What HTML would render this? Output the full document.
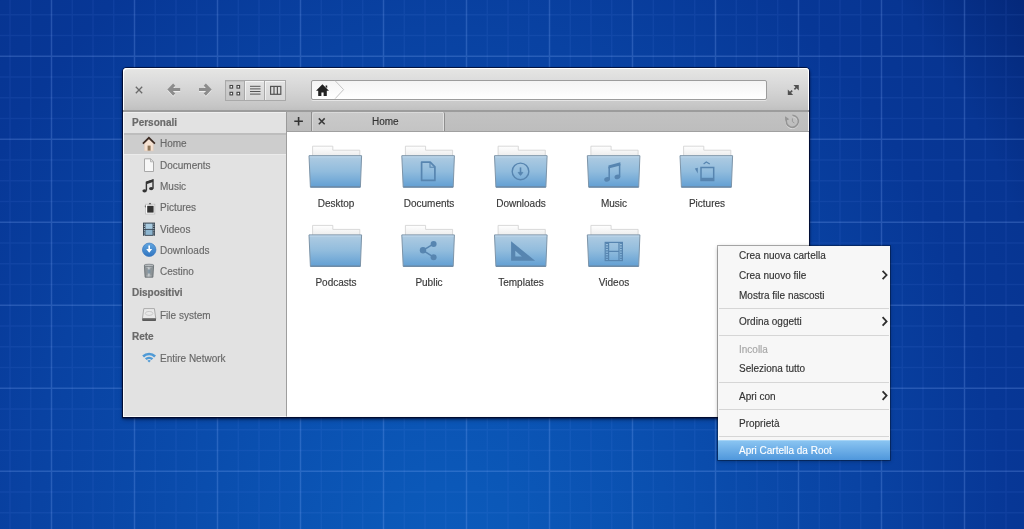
<!DOCTYPE html>
<html><head><meta charset="utf-8">
<style>
*{margin:0;padding:0;box-sizing:border-box}
html,body{width:1024px;height:529px;overflow:hidden}
body{position:relative;font-family:"Liberation Sans",sans-serif;font-size:10px;
background:radial-gradient(ellipse 732px 968px at 450px 600px,#0c5cbe 0%,#0b58b8 12%,#0942a2 59%,#073796 77%,#073592 87%,#04287a 100%);}
#grid{position:absolute;left:0;top:0;width:1024px;height:529px}
.win{position:absolute;left:123px;top:68px;width:686px;height:349px;background:#e2e2e2;
 border-radius:4px 4px 0 0;box-shadow:0 0 0 1px rgba(0,8,40,.75),0 1px 2px 1px rgba(0,0,30,.55),0 3px 4px rgba(0,0,30,.35)}
.tb{position:absolute;left:0;top:0;width:686px;height:44px;border-radius:4px 4px 0 0;
 background:linear-gradient(#e6e6e4 0%,#dcdcdc 30%,#d2d2d2 60%,#c6c6c6 90%,#c0c0c0 100%);border-bottom:2px solid #9c9c9c;box-shadow:inset 1px 1px 0 #fff,inset -1px 0 0 #fff}
.side{position:absolute;left:0;top:44px;width:163px;height:305px;background:#e2e2e2;border-top:1px solid #efefef;border-left:1px solid #fafafa;border-bottom:1px solid #fafafa}
.tabbar{position:absolute;left:163px;top:44px;width:523px;height:20px;background:linear-gradient(#c2c2c2,#bdbdbd);border-left:1px solid #9a9a9a;border-bottom:1px solid #a0a0a0;box-shadow:inset -1px 0 0 #f4f4f4}
.content{position:absolute;left:163px;top:64px;width:523px;height:285px;background:#fff;border-left:1px solid #9e9e9e;border-bottom:1px solid #fafafa;box-shadow:inset -1px 0 0 #fafafa}

.vs{position:absolute;top:80px;width:20px;height:21px;border:1px solid #a9a9a9;background:linear-gradient(#d0d0d0,#c6c6c6);box-shadow:inset 0 1px 1px rgba(0,0,0,.08)}
.vs2{background:linear-gradient(#e4e4e4,#d6d6d6);box-shadow:inset 1px 1px 0 rgba(255,255,255,.6);border-left:none}
.loc{position:absolute;left:311px;top:80px;width:456px;height:20px;border:1px solid #9c9c9c;border-radius:2px;background:linear-gradient(#f4f4f4,#fff);box-shadow:0 1px 0 rgba(255,255,255,.5)}

.selrow{position:absolute;left:124px;top:133px;width:162px;height:22px;background:#cdcdcd;border-top:2px solid #bdbdbd;border-bottom:1px solid #ebebeb}
.sh{position:absolute;left:131.5px;font-weight:bold;color:#6a6a6a;-webkit-text-stroke:.2px #6a6a6a;line-height:12px;white-space:nowrap}
.si{position:absolute;left:159.8px;color:#686868;-webkit-text-stroke:.15px #686868;line-height:12px;white-space:nowrap}

.plusb{position:absolute;left:287px;top:112px;width:25px;height:19px;background:linear-gradient(#c2c2c2,#bcbcbc);border-right:1px solid #8e8e8e}
.tab{position:absolute;left:312px;top:112px;width:133px;height:19px;background:linear-gradient(#cacaca,#c4c4c4);border-radius:2px 2px 0 0;border-right:1px solid #8e8e8e;box-shadow:inset 1px 1px 0 rgba(255,255,255,.3),inset -1px 0 0 rgba(255,255,255,.45)}
.tabtxt{position:absolute;-webkit-text-stroke:.15px #333;line-height:12px;white-space:nowrap}

.lab{position:absolute;width:80px;text-align:center;color:#3a3a3a;-webkit-text-stroke:.15px #333;line-height:12px;white-space:nowrap}

.menu{position:absolute;left:718px;top:246px;width:172px;height:214px;background:#f7f7f7;box-shadow:0 0 0 1px rgba(0,0,0,.3),0 1px 4px rgba(0,0,0,.35)}
.mhl{position:absolute;left:718px;top:440px;width:172px;height:20px;background:linear-gradient(#8cc6f2,#4f97dc);box-shadow:inset 0 1px 0 #a6d4f6}
.mi{position:absolute;left:739px;font-size:10px;-webkit-text-stroke:.15px currentColor;line-height:12px;white-space:nowrap}
.sep{position:absolute;left:719px;width:170px;height:1px;background:#d6d6d6}
.sh,.si,.lab,.mi,.tabtxt{will-change:transform}
</style></head><body>
<svg id="grid" width="1024" height="529"><path d="M10.0 0V529M30.75 0V529M72.25 0V529M93.0 0V529M113.75 0V529M155.25 0V529M176.0 0V529M196.75 0V529M238.25 0V529M259.0 0V529M279.75 0V529M321.25 0V529M342.0 0V529M362.75 0V529M404.25 0V529M425.0 0V529M445.75 0V529M487.25 0V529M508.0 0V529M528.75 0V529M570.25 0V529M591.0 0V529M611.75 0V529M653.25 0V529M674.0 0V529M694.75 0V529M736.25 0V529M757.0 0V529M777.75 0V529M819.25 0V529M840.0 0V529M860.75 0V529M902.25 0V529M923.0 0V529M943.75 0V529M985.25 0V529M1006.0 0V529M1026.75 0V529M0 14.8H1024M0 35.55H1024M0 77.05H1024M0 97.8H1024M0 118.55H1024M0 160.05H1024M0 180.8H1024M0 201.55H1024M0 243.05H1024M0 263.8H1024M0 284.55H1024M0 326.05H1024M0 346.8H1024M0 367.55H1024M0 409.05H1024M0 429.8H1024M0 450.55H1024M0 492.05H1024M0 512.8H1024M0 533.55H1024" stroke="#6fa0ff" stroke-opacity=".09" stroke-width="1.4" fill="none"/><path d="M51.5 0V529M134.5 0V529M217.5 0V529M300.5 0V529M383.5 0V529M466.5 0V529M549.5 0V529M632.5 0V529M715.5 0V529M798.5 0V529M881.5 0V529M964.5 0V529M0 56.3H1024M0 139.3H1024M0 222.3H1024M0 305.3H1024M0 388.3H1024M0 471.3H1024" stroke="#8ab4ff" stroke-opacity=".24" stroke-width="1.5" fill="none"/></svg>
<div class="win">
 <div class="tb"></div>
 <div class="side"></div>
 <div class="tabbar"></div>
 <div class="content"></div>
</div>

<div class="selrow"></div>
<div class="sh" style="top:116.73px">Personali</div>
<div class="si" style="top:138.43px">Home</div>
<div class="si" style="top:159.73px">Documents</div>
<div class="si" style="top:181.03px">Music</div>
<div class="si" style="top:202.33px">Pictures</div>
<div class="si" style="top:223.63px">Videos</div>
<div class="si" style="top:244.93px">Downloads</div>
<div class="si" style="top:266.23px">Cestino</div>
<div class="sh" style="top:287.43px">Dispositivi</div>
<div class="si" style="top:309.83px">File system</div>
<div class="sh" style="top:330.93px">Rete</div>
<div class="si" style="top:353.23px">Entire Network</div>
<svg style="position:absolute;left:0;top:0" width="1024" height="529">
 <!-- home -->
 <path d="M144.6 143.2V150.8H153.2V143.2L148.9 139.2Z" fill="#f6e2d2" stroke="#e8cdb8" stroke-width=".6"/>
 <rect x="147.6" y="145.6" width="3" height="5" fill="#8c7356"/>
 <path d="M142.9 143.6L148.9 137.8L154.9 143.6" stroke="#3b2a22" stroke-width="1.7" fill="none"/>
 <!-- documents -->
 <path d="M144.5 158.8H150.8L153.5 161.5V171.5H144.5Z" fill="#f7f7f7" stroke="#a8a8a8" stroke-width="1"/>
 <path d="M150.5 158.8V161.8H153.5" fill="#ddd" stroke="#a8a8a8" stroke-width=".8"/>
 <!-- music -->
 <path d="M146.4 190.6V182.2L153 180V188.4" stroke="#333" stroke-width="1.4" fill="none"/>
 <path d="M146.4 181.6L153 179.4V182L146.4 184.2Z" fill="#333"/>
 <ellipse cx="144.6" cy="190.8" rx="2.2" ry="1.6" fill="#333"/>
 <ellipse cx="151.2" cy="188.6" rx="2.2" ry="1.6" fill="#333"/>
 <!-- pictures -->
 <rect x="145.6" y="204.2" width="9.2" height="9.8" fill="#fafafa" stroke="#bdbdbd" stroke-width=".8"/>
 <rect x="147.2" y="205.8" width="6.4" height="6.8" fill="#333"/>
 <path d="M148.6 204.2L150 202.8L151.4 204.2Z" fill="#444"/>
 <path d="M144.6 206L145.6 205.2V208Z" fill="#444"/>
 <!-- videos -->
 <rect x="143" y="222.6" width="12" height="13.2" fill="#36434f"/>
 <rect x="145.4" y="223.6" width="7.2" height="5.3" fill="#a9cbe0"/>
 <rect x="145.4" y="229.8" width="7.2" height="5.1" fill="#8db5cf"/>
 <rect x="143.9" y="223.6" width="1" height="1.1" fill="#b8c8d4"/><rect x="153.3" y="223.6" width="1" height="1.1" fill="#b8c8d4"/><rect x="143.9" y="225.8" width="1" height="1.1" fill="#b8c8d4"/><rect x="153.3" y="225.8" width="1" height="1.1" fill="#b8c8d4"/><rect x="143.9" y="228.0" width="1" height="1.1" fill="#b8c8d4"/><rect x="153.3" y="228.0" width="1" height="1.1" fill="#b8c8d4"/><rect x="143.9" y="230.2" width="1" height="1.1" fill="#b8c8d4"/><rect x="153.3" y="230.2" width="1" height="1.1" fill="#b8c8d4"/><rect x="143.9" y="232.4" width="1" height="1.1" fill="#b8c8d4"/><rect x="153.3" y="232.4" width="1" height="1.1" fill="#b8c8d4"/><rect x="143.9" y="234.6" width="1" height="1.1" fill="#b8c8d4"/><rect x="153.3" y="234.6" width="1" height="1.1" fill="#b8c8d4"/>
 <!-- downloads -->
 <defs><linearGradient id="dlg" x1="0" y1="0" x2="0" y2="1"><stop offset="0" stop-color="#62a6e0"/><stop offset="1" stop-color="#2f74c0"/></linearGradient></defs>
 <circle cx="149.2" cy="249.8" r="7.6" fill="#fff" fill-opacity=".35"/>
 <circle cx="149.2" cy="249.8" r="6.8" fill="url(#dlg)" stroke="#2c6cb4" stroke-width=".6"/>
 <path d="M148.4 245.6H150V249H152.2L149.2 252.8L146.2 249H148.4Z" fill="#fff"/>
 <!-- trash -->
 <defs><linearGradient id="trg" x1="0" y1="0" x2="1" y2="0"><stop offset="0" stop-color="#7d8488"/><stop offset=".45" stop-color="#c4c9cc"/><stop offset="1" stop-color="#80878b"/></linearGradient></defs>
 <path d="M144.4 265.4H153.6L152.9 277.2H145.1Z" fill="url(#trg)" stroke="#60676b" stroke-width=".8"/>
 <path d="M147 268V275.4M151 268V275.4" stroke="#6f767a" stroke-width=".7"/>
 <rect x="147.6" y="269.5" width="2.8" height="4" fill="#5c7a8e" fill-opacity=".6"/>
 <ellipse cx="149" cy="265.4" rx="4.9" ry="1.2" fill="#b9bec1" stroke="#60676b" stroke-width=".6"/>
 <!-- drive -->
 <path d="M143.8 308.6H154.4L155.8 318.6H142.4Z" fill="#e9e9e9" stroke="#9c9c9c" stroke-width=".8"/>
 <ellipse cx="149.1" cy="313.4" rx="3.8" ry="2" fill="none" stroke="#c2c2c2" stroke-width=".8"/>
 <rect x="142.2" y="318.2" width="13.8" height="2.8" rx=".8" fill="#5a5a5a"/>
 <path d="M143 318.8H155.2" stroke="#909090" stroke-width=".6"/>
 <!-- wifi -->
 <path d="M142.2 355.6A10 10 0 0 1 156 355.6L154.2 357.4A7.4 7.4 0 0 0 144 357.4Z" fill="#4f9ad6"/>
 <path d="M144.9 358.3A6.2 6.2 0 0 1 153.3 358.3L151.6 360A3.8 3.8 0 0 0 146.6 360Z" fill="#4f9ad6"/>
 <path d="M147.4 360.8A2.6 2.6 0 0 1 150.8 360.8L149.1 362.6Z" fill="#4f9ad6"/>
</svg>
<svg style="position:absolute;left:0;top:0" width="1024" height="529">
 <!-- close x -->
 <path d="M135.8 86.8L142.2 93.2M142.2 86.8L135.8 93.2" stroke="#6a6a6a" stroke-width="1.3"/>
 <!-- back arrow -->
 <g stroke="#fff" stroke-opacity=".6" stroke-width="3" fill="none" transform="translate(0,1)">
  <path d="M174.2 84.6L169.4 89.6L174.2 94.6M169.6 89.6H180.2"/>
  <path d="M199 89.6H209.8M204.8 84.6L209.6 89.6L204.8 94.6"/>
 </g>
 <g stroke="#8c8c8c" stroke-width="3" fill="none">
  <path d="M174.2 84.6L169.4 89.6L174.2 94.6M169.6 89.6H180.2"/>
  <path d="M199 89.6H209.8M204.8 84.6L209.6 89.6L204.8 94.6"/>
 </g>
</svg>
<div class="vs" style="left:225px"></div>
<div class="vs vs2" style="left:245px"></div>
<div class="vs vs2" style="left:265px;width:21px"></div>
<svg style="position:absolute;left:0;top:0" width="1024" height="529">
 <g fill="#fff" stroke="#444" stroke-width="1.1">
  <rect x="230" y="85.5" width="2.6" height="2.6"/><rect x="237" y="85.5" width="2.6" height="2.6"/>
  <rect x="230" y="92.3" width="2.6" height="2.6"/><rect x="237" y="92.3" width="2.6" height="2.6"/>
 </g>
 <path d="M250 86.3H260.5M250 88.9H260.5M250 91.5H260.5M250 94.1H260.5" stroke="#555" stroke-width="1"/>
 <g fill="none" stroke="#555" stroke-width="1.2"><rect x="270.6" y="86.4" width="10.2" height="7.9"/><path d="M274 86.4V94.3M277.4 86.4V94.3"/></g>
</svg>
<div class="loc"></div>
<svg style="position:absolute;left:0;top:0" width="1024" height="529">
 <path d="M335.2 80.8L343.6 89.6L335.2 98.6" stroke="#c4c4c4" stroke-width="1" fill="none"/>
 <path d="M322.4 84.3L316 90.8H318.2V95.9H321.4V92.6H323.6V95.9H326.8V90.8H329Z" fill="#222"/>
 <path d="M325.6 85.6h1.6v2.6l-1.6-1.4z" fill="#222"/>
 <!-- maximize -->
 <path d="M793.4 85H798.8V90.4Z M787.8 89.6V95H793.2Z" fill="#505050"/>
 <path d="M796.8 87L794.4 89.4M789.8 93L792.2 90.6" stroke="#505050" stroke-width="1.6"/>
</svg>

<div class="plusb"></div>
<div class="tab"></div>
<div class="tabtxt" style="left:372px;top:115.9px;color:#333">Home</div>
<svg style="position:absolute;left:0;top:0" width="1024" height="529">
 <path d="M298.6 117V125.6M294.3 121.3H302.9" stroke="#333" stroke-width="1.6"/>
 <path d="M318.8 118.4L324.7 124.3M324.7 118.4L318.8 124.3" stroke="#3a3a3a" stroke-width="1.5"/>
 <g transform="translate(0,.8)" stroke="#fff" stroke-opacity=".45" fill="none" stroke-width="1.6"><path d="M787 118.6A6 6 0 1 0 792.4 115.4"/></g>
 <path d="M787 118.6A6 6 0 1 0 792.4 115.4" stroke="#959595" stroke-width="1.6" fill="none"/>
 <path d="M785 116.2L789.4 119.2L785.2 120.8Z" fill="#959595"/>
 <path d="M792.4 118.4V121.6L794.4 123" stroke="#999" stroke-width="1" fill="none"/>
</svg>
<svg style="position:absolute;left:0;top:0" width="1024" height="529">
<defs>
 <linearGradient id="fg" x1="0" y1="0" x2="0" y2="1"><stop offset="0" stop-color="#b0cce2"/><stop offset=".5" stop-color="#91bcdd"/><stop offset="1" stop-color="#629fd3"/></linearGradient>
 <linearGradient id="pg" x1="0" y1="0" x2="0" y2="1"><stop offset="0" stop-color="#ffffff"/><stop offset="1" stop-color="#ececec"/></linearGradient>
 <g id="fold">
  <path d="M-22.6 0.4H-2.4V4.4H24.6V10.5H-22.6Z" fill="url(#pg)" stroke="#cfcfcf" stroke-width=".8"/>
  <path d="M-26.2 9.9H26.4L25.2 41.4H-24.8Z" fill="url(#fg)" stroke="#7d94a8" stroke-width="1" stroke-linejoin="round"/>
  <path d="M-25.4 11.1H25.6" stroke="#bed6ea" stroke-width="1"/>
  <path d="M-24.6 41.1H25" stroke="#6a88a6" stroke-width="1.4"/>
 </g>
</defs>
<g transform="translate(335.2,145.8)"><use href="#fold"/></g>
<g transform="translate(428.0,145.8)"><use href="#fold"/><path d="M-6.4 16.4H2.2L6.9 21.1V34.6H-6.4Z" fill="none" stroke="#5785b0" stroke-width="1.7" stroke-linejoin="round"/><path d="M2 16.6V21.4H6.7" fill="none" stroke="#5785b0" stroke-width="1.1"/></g>
<g transform="translate(520.7,145.8)"><use href="#fold"/><circle cx="-0.2" cy="25.6" r="8.3" fill="none" stroke="#5785b0" stroke-width="1.4"/><path d="M-0.2 21.6V28.8" stroke="#5785b0" stroke-width="1.6"/><path d="M-2.6 26.6H2.2L-0.2 29.6Z" fill="#5785b0" stroke="#5785b0" stroke-width=".8" stroke-linejoin="round"/></g>
<g transform="translate(613.5,145.8)"><use href="#fold"/><path d="M-4.3 33.6V21.2M6.1 31V18.2" stroke="#5785b0" stroke-width="1.5"/><path d="M-5.05 19.6L6.85 16.4V19.6L-5.05 22.8Z" fill="#5785b0"/><ellipse cx="-6.4" cy="33.6" rx="2.9" ry="2.3" fill="#5785b0" transform="rotate(-20 -6.4 33.6)"/><ellipse cx="3.9" cy="31.1" rx="2.9" ry="2.3" fill="#5785b0" transform="rotate(-20 3.9 31.1)"/></g>
<g transform="translate(706.2,145.8)"><use href="#fold"/><path d="M-5.2 21.7H7.5V34.8H-5.2Z" fill="none" stroke="#5785b0" stroke-width="1.5"/><rect x="-5.2" y="32" width="12.7" height="2.8" fill="#5785b0"/><path d="M-2.6 18.2L0.1 16.2L3.6 18.2" fill="none" stroke="#5785b0" stroke-width="1.2"/><path d="M-11.4 22.8L-8.4 22V27.8Z" fill="#5785b0"/></g>
<g transform="translate(335.2,225)"><use href="#fold"/></g>
<g transform="translate(428.0,225)"><use href="#fold"/><path d="M-5 25.3L5.6 18.9M-5 25.3L5.6 32.2" stroke="#5785b0" stroke-width="1.5"/><circle cx="-5" cy="25.3" r="3.2" fill="#5785b0"/><circle cx="5.6" cy="18.9" r="3" fill="#5785b0"/><circle cx="5.6" cy="32.2" r="3" fill="#5785b0"/></g>
<g transform="translate(520.7,225)"><use href="#fold"/><path d="M-9.6 16.2V35.8H14.4ZM-5.4 25.8V31.6H1.2Z" fill="#5785b0" fill-rule="evenodd"/></g>
<g transform="translate(613.5,225)"><use href="#fold"/><rect x="-8.3" y="17.4" width="17.2" height="18.2" fill="none" stroke="#5785b0" stroke-width="1.2"/><path d="M-4.9 17.4V35.6M5.5 17.4V35.6M-4.9 26.4H5.5" stroke="#5785b0" stroke-width="1.2"/><path d="M-6.6 17.8V35.2M7.8 17.8V35.2" stroke="#5785b0" stroke-width="2.4" stroke-dasharray="1.3 1.2"/></g>
</svg>
<div class="lab" style="left:295.8px;top:197.93px">Desktop</div>
<div class="lab" style="left:388.6px;top:197.93px">Documents</div>
<div class="lab" style="left:481.3px;top:197.93px">Downloads</div>
<div class="lab" style="left:574.1px;top:197.93px">Music</div>
<div class="lab" style="left:666.8px;top:197.93px">Pictures</div>
<div class="lab" style="left:295.8px;top:276.53px">Podcasts</div>
<div class="lab" style="left:388.6px;top:276.53px">Public</div>
<div class="lab" style="left:481.3px;top:276.53px">Templates</div>
<div class="lab" style="left:574.1px;top:276.53px">Videos</div>
<div class="menu"></div>
<div class="mhl"></div>
<div class="sep" style="top:308.0px"></div>
<div class="sep" style="top:334.5px"></div>
<div class="sep" style="top:381.9px"></div>
<div class="sep" style="top:408.9px"></div>
<div class="sep" style="top:436.1px"></div>
<div class="mi" style="top:250.13px;color:#333">Crea nuova cartella</div>
<div class="mi" style="top:270.03px;color:#333">Crea nuovo file</div>
<div class="mi" style="top:289.53px;color:#333">Mostra file nascosti</div>
<div class="mi" style="top:316.43px;color:#333">Ordina oggetti</div>
<div class="mi" style="top:343.63px;color:#a6a6a6">Incolla</div>
<div class="mi" style="top:363.43px;color:#333">Seleziona tutto</div>
<div class="mi" style="top:390.63px;color:#333">Apri con</div>
<div class="mi" style="top:417.63px;color:#333">Proprietà</div>
<div class="mi" style="top:444.93px;color:#fff">Apri Cartella da Root</div>
<svg style="position:absolute;left:0;top:0" width="1024" height="529"><g stroke="#2e2e2e" stroke-width="1.8" fill="none"><path d="M882.6 270.8L886.6 275.0L882.6 279.2"/><path d="M882.6 317.2L886.6 321.4L882.6 325.59999999999997"/><path d="M882.6 391.40000000000003L886.6 395.6L882.6 399.8"/></g></svg>

</body></html>
